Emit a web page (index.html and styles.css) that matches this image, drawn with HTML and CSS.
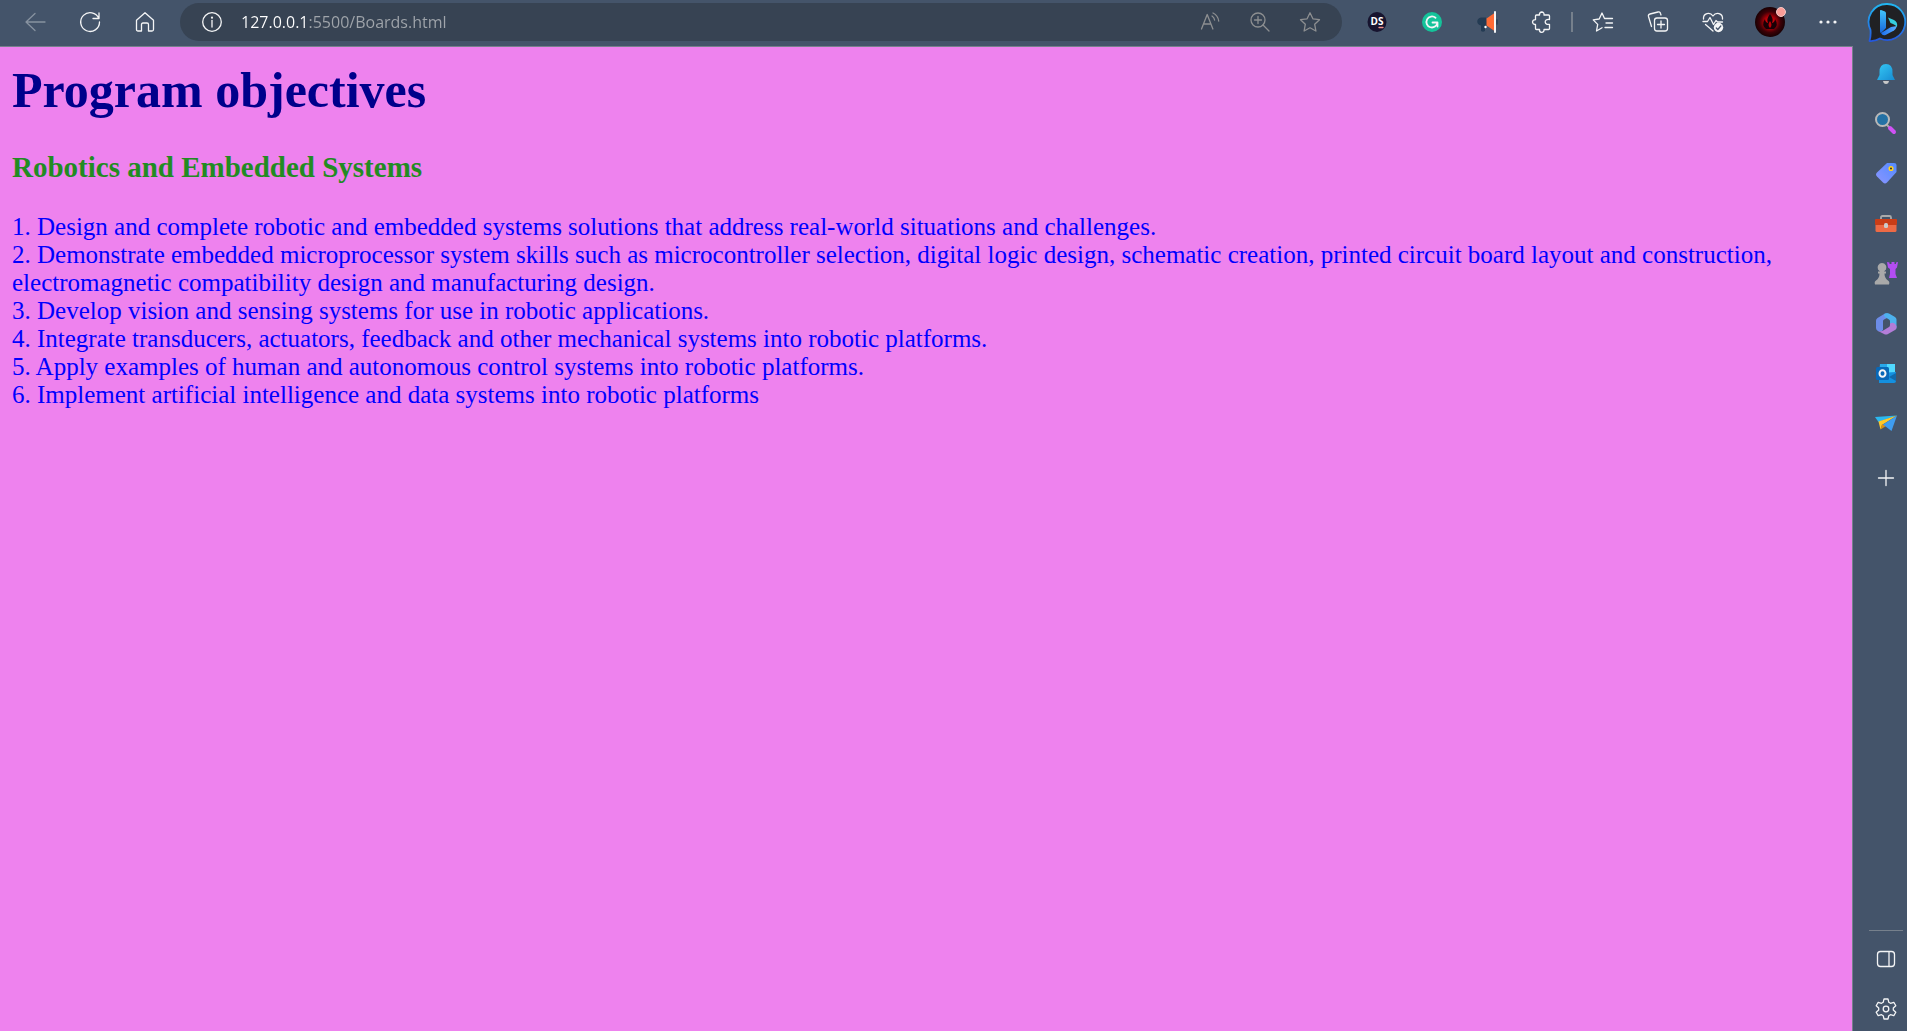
FILE: index.html
```html
<!DOCTYPE html>
<html lang="en">
<head>
<meta charset="utf-8">
<title>Boards</title>
<link rel="stylesheet" href="styles.css">
</head>
<body>
<header class="toolbar">
  <nav class="group nav">
    <button class="tool dim" aria-label="Back"><svg viewBox="0 0 24 24"><path d="M22 12H3M12 3.500 3 12l9 8.500"/></svg></button>
    <button class="tool" aria-label="Refresh"><svg viewBox="0 0 24 24"><path d="M20.800 8.500A9.400 9.400 0 1 0 21.500 12M21 3v5.500h-6"/></svg></button>
    <button class="tool" aria-label="Home"><svg viewBox="0 0 24 24"><path d="M3.500 10.300 12 2.700l8.500 7.600v9.200q0 1.500-1.500 1.500h-3.500v-6.500q0-1.500-1.500-1.500h-4q-1.500 0-1.500 1.500V21H5q-1.500 0-1.500-1.500z"/></svg></button>
  </nav>
  <form class="address">
    <button type="button" class="info" aria-label="Site information"><svg viewBox="0 0 24 24"><circle cx="12" cy="12" r="9.300"/><path d="M12 10.500v6.500"/><circle class="solid" cx="12" cy="7.700" r="1.100"/></svg></button>
    <input class="url" type="text" aria-label="Address" value="127.0.0.1:5500/Boards.html" spellcheck="false">
    <button type="button" class="page-tool" aria-label="Read aloud"><svg viewBox="0 0 24 24"><path d="M3.500 19 9.200 4.500 14.900 19M5.500 14h7.400M14 6q2.200 1.500 2.600 4M15 3q5 2.500 5.700 8"/></svg></button>
    <button type="button" class="page-tool" aria-label="Zoom"><svg viewBox="0 0 24 24"><circle cx="10" cy="10" r="7"/><path d="M15 15l6 6M10 6.500v7M6.500 10h7"/></svg></button>
    <button type="button" class="page-tool" aria-label="Add to favorites"><svg viewBox="0 0 24 24"><path d="M12 2.800l2.900 6 6.600.9-4.800 4.600 1.200 6.700-5.900-3.200L6.100 21l1.200-6.700-4.800-4.600 6.600-.9z"/></svg></button>
  </form>
  <div class="group">
    <button class="tool" aria-label="DS extension"><svg viewBox="0 0 24 24"><ellipse cx="12" cy="12" rx="9.500" ry="10" fill="#17142f" stroke="none"/><text class="badge-text" x="12" y="15">DS</text><path d="M14 17.500h4" stroke="#ef8f8b"/></svg></button>
    <button class="tool" aria-label="Grammar extension"><svg viewBox="0 0 24 24"><circle cx="12" cy="12" r="10" fill="#15c39a" stroke="none"/><path d="M15.500 7.800A5.500 5.500 0 1 0 17.400 12.500M12.500 12.500h5v4" stroke-width="1.800"/></svg></button>
    <button class="tool" aria-label="Announcement extension"><svg viewBox="0 0 24 24"><path d="M11 7.500H6C1 8 1 15 6 15.500v5.500q2 1.500 4 0v-5l3-1z" fill="#243b53" stroke="none"/><path d="M11.500 8.500 19.500 3v18l-8-5.500z" fill="#ff6b35" stroke="none"/><path d="M20 2v20" stroke-width="2"/><path d="M22 10v4" stroke="#243b53"/><circle cx="10.500" cy="17" r="1.200" fill="#fff" stroke="none"/></svg></button>
    <button class="tool" aria-label="Extensions"><svg viewBox="0 0 24 24"><path d="M6.500 5h3q-.5-2.500 2-3 3 .3 2.500 3h4.500q1 0 1 1v3.500c-3-.5-4.500 1-4.300 2.700.2 1.800 2 2.600 4.300 2.100V18.500q0 1-1 1H14q.3 2.700-2.500 2.800-2.300-.3-2-2.800h-3q-1 0-1-1V14.500q-2.800 0-3-2.500.2-2.300 3-2.300V6q0-1 1-1z"/></svg></button>
    <span class="separator"></span>
    <button class="tool" aria-label="Favorites"><svg viewBox="0 0 24 24"><path d="M11 17.700 5.500 21l1.200-6.600-4.500-4.500 6-.9L11 3l2.500 5.500h8M15 13h6.500M14 17.500h7.500"/></svg></button>
    <button class="tool" aria-label="Collections"><svg viewBox="0 0 24 24"><rect x="8.500" y="8" width="13" height="13" rx="2.500"/><path d="M15 11v7M11.500 14.500h7M5.500 16.500 2.500 6.500q-.5-2 1.500-2.500l8-2q2-.5 2.500 1.500l.5 1.500"/></svg></button>
    <button class="tool" aria-label="Browser essentials"><svg viewBox="0 0 24 24"><path d="M2.500 9C2 3 9 1.500 12 6c3-4.500 10-3 9.500 3M2 11.500h4.500L9 7.500l3.500 7 2.500-4 1.500 1.500h5M4.500 14.500l7.500 6.500"/><circle class="solid" cx="17.500" cy="17.500" r="4.700"/><path d="M15.300 18l1.500 1.500 3-3.500" stroke="#44546a"/></svg></button>
    <button class="tool profile" aria-label="Profile"><svg class="avatar" viewBox="0 0 32 32"><defs><radialGradient id="red"><stop offset="0" stop-color="#f50b12"/><stop offset=".35" stop-color="#b80008"/><stop offset=".7" stop-color="#3d0006"/><stop offset="1" stop-color="#180003"/></radialGradient></defs><circle cx="16" cy="16" r="15" fill="url(#red)" stroke="none"/><path d="M16 8q4 5 2 9 3-1 3-4 4 6-1 10h-8q-5-4-1-10 0 3 3 4-2-4 2-9z" fill="#190006" stroke="none"/><path d="M16 15q3 4 0 7-3-3 0-7z" fill="#bd0008" stroke="none"/><circle cx="27" cy="6" r="4.500" fill="#fb9d98" stroke="#f5c7c5" stroke-width="1"/></svg></button>
    <button class="tool" aria-label="Settings and more"><svg viewBox="0 0 24 24"><g class="solid"><circle cx="5" cy="12" r="1.600"/><circle cx="12" cy="12" r="1.600"/><circle cx="19" cy="12" r="1.600"/></g></svg></button>
    <button class="bing" aria-label="Bing chat"><svg viewBox="0 0 40 40"><defs><linearGradient id="ring" x2="0" y2="1"><stop stop-color="#20b7f2"/><stop offset="1" stop-color="#2457dd"/></linearGradient><linearGradient id="stem" x2="0" y2="1"><stop stop-color="#41c7fb"/><stop offset="1" stop-color="#1765dd"/></linearGradient><linearGradient id="base" x2="1"><stop stop-color="#1a6df0"/><stop offset="1" stop-color="#5cb0ff"/></linearGradient></defs><path d="M20 2a18 18 0 1 1-7 34.500q-5 3-10.500 2.500Q4 34 3.500 28A18 18 0 0 1 20 2z" fill="#202124" stroke="url(#ring)" stroke-width="1.800"/><path d="M14 31l10-6 6-1q-1 3-3 4.500L18.500 33q-3 1-4.500-2z" fill="url(#base)" stroke="none"/><path d="M14 8l4 1.500q1 .5 1 2V26l-5 5q-1 0-1-2V9q0-1.500 1-1z" fill="url(#stem)" stroke="none"/><path d="M21 15.500l6 2.500q4 2 3 7-1.500-2-4-3l-2.500-1z" fill="#35cfdf" stroke="none"/></svg></button>
  </div>
</header>
<div class="workspace">
  <main class="page">
    <h1>Program objectives</h1>
    <h3>Robotics and Embedded Systems</h3>
    <p>1. Design and complete robotic and embedded systems solutions that address real-world situations and challenges.<br>
    2. Demonstrate embedded microprocessor system skills such as microcontroller selection, digital logic design, schematic creation, printed circuit board layout and construction, electromagnetic compatibility design and manufacturing design.<br>
    3. Develop vision and sensing systems for use in robotic applications.<br>
    4. Integrate transducers, actuators, feedback and other mechanical systems into robotic platforms.<br>
    5. Apply examples of human and autonomous control systems into robotic platforms.<br>
    6. Implement artificial intelligence and data systems into robotic platforms</p>
  </main>
  <aside class="sidebar">
    <button class="side" aria-label="Notifications"><svg viewBox="0 0 24 24"><defs><linearGradient id="bell" x2="1" y2="1"><stop stop-color="#36c9f5"/><stop offset="1" stop-color="#168bd2"/></linearGradient></defs><path d="M9 19h6q-.5 3-3 3t-3-3z" fill="#c8c8c8" stroke="none"/><path d="M12 2q6.500 0 6.500 8v3l2.500 5H3l2.500-5v-3q0-8 6.500-8z" fill="url(#bell)" stroke="none"/></svg></button>
    <button class="side" aria-label="Search"><svg viewBox="0 0 24 24"><path d="M13 13l3 3" stroke="#aaa" stroke-width="2"/><path d="M16 16l4 4" stroke="#d052f5" stroke-width="4"/><circle cx="8.500" cy="7.500" r="6.500" fill="#2471a5" stroke="#b9b9b9" stroke-width="2"/></svg></button>
    <button class="side" aria-label="Shopping"><svg viewBox="0 0 24 24"><defs><linearGradient id="tag" x1="1" x2="0" y2="1"><stop stop-color="#538bff"/><stop offset="1" stop-color="#8b95ff"/></linearGradient></defs><path d="M13 1h7q2.500 0 2.500 2v7L13 20.500q-2 2-4 0l-6-6q-2-2 0-4z" fill="url(#tag)" stroke="none"/><circle cx="17" cy="6.500" r="1.800" fill="#333" stroke="#ffd21f" stroke-width="1.500"/></svg></button>
    <button class="side" aria-label="Tools"><svg viewBox="0 0 24 24"><path d="M7 8V5.500Q7 4 8.500 4h7Q17 4 17 5.500V8" stroke="#aaa" stroke-width="1.800"/><rect x="1.500" y="12" width="21" height="8" rx="1.500" fill="#ed6a45" stroke="none"/><rect x="1" y="7" width="22" height="6" rx="1" fill="#ca3d17" stroke="none"/><rect x="10" y="11" width="4" height="5" rx="1.500" fill="#ccc" stroke="none"/></svg></button>
    <button class="side" aria-label="Games"><svg viewBox="0 0 24 24"><path d="M13 0l2.500.5V2h2V0h3v2h1.500V.500L24 0l-1 5.500-1.500 1.500v5l1.500 4h-8l1-4V7l-2-1.500z" fill="#b34df2" stroke="none"/><path d="M8 1a4.500 4.500 0 0 1 4 6.500l-2 2h2v2h-1.500q0 4.500 3.500 7 2 1 1 4H1q-1-3 1-4 3.500-2.500 3.500-7H4v-2h2l-2-2A4.500 4.500 0 0 1 8 1z" fill="#a9a9a9" stroke="none"/></svg></button>
    <button class="side" aria-label="Microsoft 365"><svg viewBox="0 0 24 24"><g stroke="none"><path d="M11 1.500 3.500 6Q2 7 2 8.500V16q0 2 2 3 3 1.500 5-1V9q0-1 1-1.500L15 5q0-3-4-3.500z" fill="#6c8ce8"/><path d="M11 1.500q2-1 4 0L21 5q1.500 1 1.500 2.500V15q0 1.500-1 2.500-.5-3-3-4.500L16 11.500V9q0-1-1-1.500L11 5q-2-2 0-3.500z" fill="#4db1ed"/><path d="M22.500 14v1.500q0 1.500-1.500 2.500l-7 4q-2 1-4 0l-6-3q4 1 6-1l5-3q1-.5 1-2v-1.500q4-2.500 6.500 2.500z" fill="#b37dd8"/></g></svg></button>
    <button class="side" aria-label="Outlook"><svg viewBox="0 0 24 24"><path d="M6 2h13q2 0 2 2v8H5z" fill="#28a8ea" stroke="none"/><path d="M13 2h8v9h-8z" fill="#50d9ff" stroke="none"/><path d="M5 11l17-1v9q0 2-2 2H5z" fill="#1490df" stroke="none"/><path d="M22 11v8l-7-4z" fill="#1169ab" stroke="none"/><rect x="2" y="5" width="13" height="13" rx="1.500" fill="#0868b7" stroke="none"/><ellipse cx="8.500" cy="11.500" rx="3" ry="3.300" stroke-width="2"/></svg></button>
    <button class="side" aria-label="Drop"><svg viewBox="0 0 24 24"><path d="M1 5l22-1.500L4.500 10z" fill="#2bb9f0" stroke="none"/><path d="M4.500 9.500 23 3.500 8 13l-1.500 4.500z" fill="#ffc928" stroke="none"/><path d="M6.500 17.500 8 12l4 2z" fill="#d89117" stroke="none"/><path d="M23 3.500 17.500 19 9 12.500z" fill="#3f9df0" stroke="none"/></svg></button>
    <button class="side add" aria-label="Customize"><svg viewBox="0 0 24 24"><path d="M12 4.500v15M4.500 12h15"/></svg></button>
    <hr>
    <button class="side" aria-label="Toggle sidebar"><svg viewBox="0 0 24 24"><rect x="3.500" y="4.500" width="17" height="15" rx="3"/><path d="M15 5v14"/></svg></button>
    <button class="side" aria-label="Settings"><svg viewBox="0 0 24 24"><path d="M10 2h4l.8 3.300 1.700 1 3.300-1 2 3.500-2.500 2.300v1.800l2.500 2.300-2 3.500-3.300-1-1.700 1L14 22h-4l-.8-3.300-1.700-1-3.300 1-2-3.500 2.500-2.300v-1.800L2.200 8.800l2-3.500 3.300 1 1.700-1z"/><circle cx="12" cy="12" r="2.800"/></svg></button>
  </aside>
</div>
</body>
</html>
```
FILE: styles.css
```css
* {
  box-sizing: border-box;
}

body {
  margin: 0;
  min-height: 100vh;
  display: flex;
  flex-direction: column;
  background: #44546a;
}

button {
  display: flex;
  align-items: center;
  justify-content: center;
  padding: 0;
  border: 0;
  background: none;
  color: #f4f5f6;
}

svg {
  width: 24px;
  height: 24px;
  fill: none;
  stroke: currentColor;
  stroke-width: 1.3;
  stroke-linejoin: round;
  stroke-linecap: round;
}

.solid {
  fill: currentColor;
  stroke: none;
}

.toolbar {
  display: flex;
  height: 46px;
  padding: 0 0 2px 7px;
}

.group {
  display: flex;
  align-items: center;
}

.nav {
  margin-right: 8px;
}

.tool {
  width: 55px;
  height: 38px;
}

.dim {
  color: #8792a0;
}

.address {
  flex: 1;
  display: flex;
  align-items: center;
  height: 38px;
  margin: 3px 7px 0 0;
  padding: 0 7px 0 20px;
  border-radius: 19px;
  background: #374353;
}

.info {
  width: 24px;
}

.url {
  flex: 1;
  min-width: 0;
  margin-left: 17px;
  padding: 0;
  border: 0;
  outline: 0;
  font: 16px/24px "Open Sans", sans-serif;
  color: transparent;
  background: linear-gradient(to right, #ffffff 68px, #a0a5ab 68px);
  background-clip: text;
  -webkit-background-clip: text;
}

.page-tool {
  width: 50px;
  color: #8d8f91;
}

.badge-text {
  font: bold 10px "Open Sans", sans-serif;
  fill: #ffffff;
  stroke: none;
  text-anchor: middle;
}

.separator {
  width: 2px;
  height: 20px;
  margin: 0 2px;
  background: #76808c;
}

.profile {
  width: 60px;
}

.avatar {
  width: 32px;
  height: 32px;
}

.bing {
  width: 52px;
  padding-left: 11px;
}

.bing svg {
  width: 40px;
  height: 40px;
}

.workspace {
  flex: 1;
  display: flex;
}

.page {
  flex: 1;
  padding: 15px 12px;
  border-top: 1px solid #76808c;
  border-right: 1px solid #76808c;
  background: #ee82ee;
  font-family: "Liberation Serif", serif;
}

h1 {
  margin: 0;
  font-size: 50px;
  line-height: 56px;
  color: #00008b;
}

h3 {
  margin: 33px 0 30px;
  font-size: 29px;
  line-height: 32px;
  color: #228b22;
}

p {
  margin: 0;
  font-size: 25px;
  line-height: 28px;
  color: #0000ff;
}

.sidebar {
  width: 54px;
  display: flex;
  flex-direction: column;
  gap: 6px;
  padding: 6px 0 0 12px;
}

.side {
  height: 44px;
}

.add {
  margin-top: 4px;
}

hr {
  width: 34px;
  height: 1px;
  margin: auto auto 0 4px;
  border: 0;
  background: #76808c;
}
```
